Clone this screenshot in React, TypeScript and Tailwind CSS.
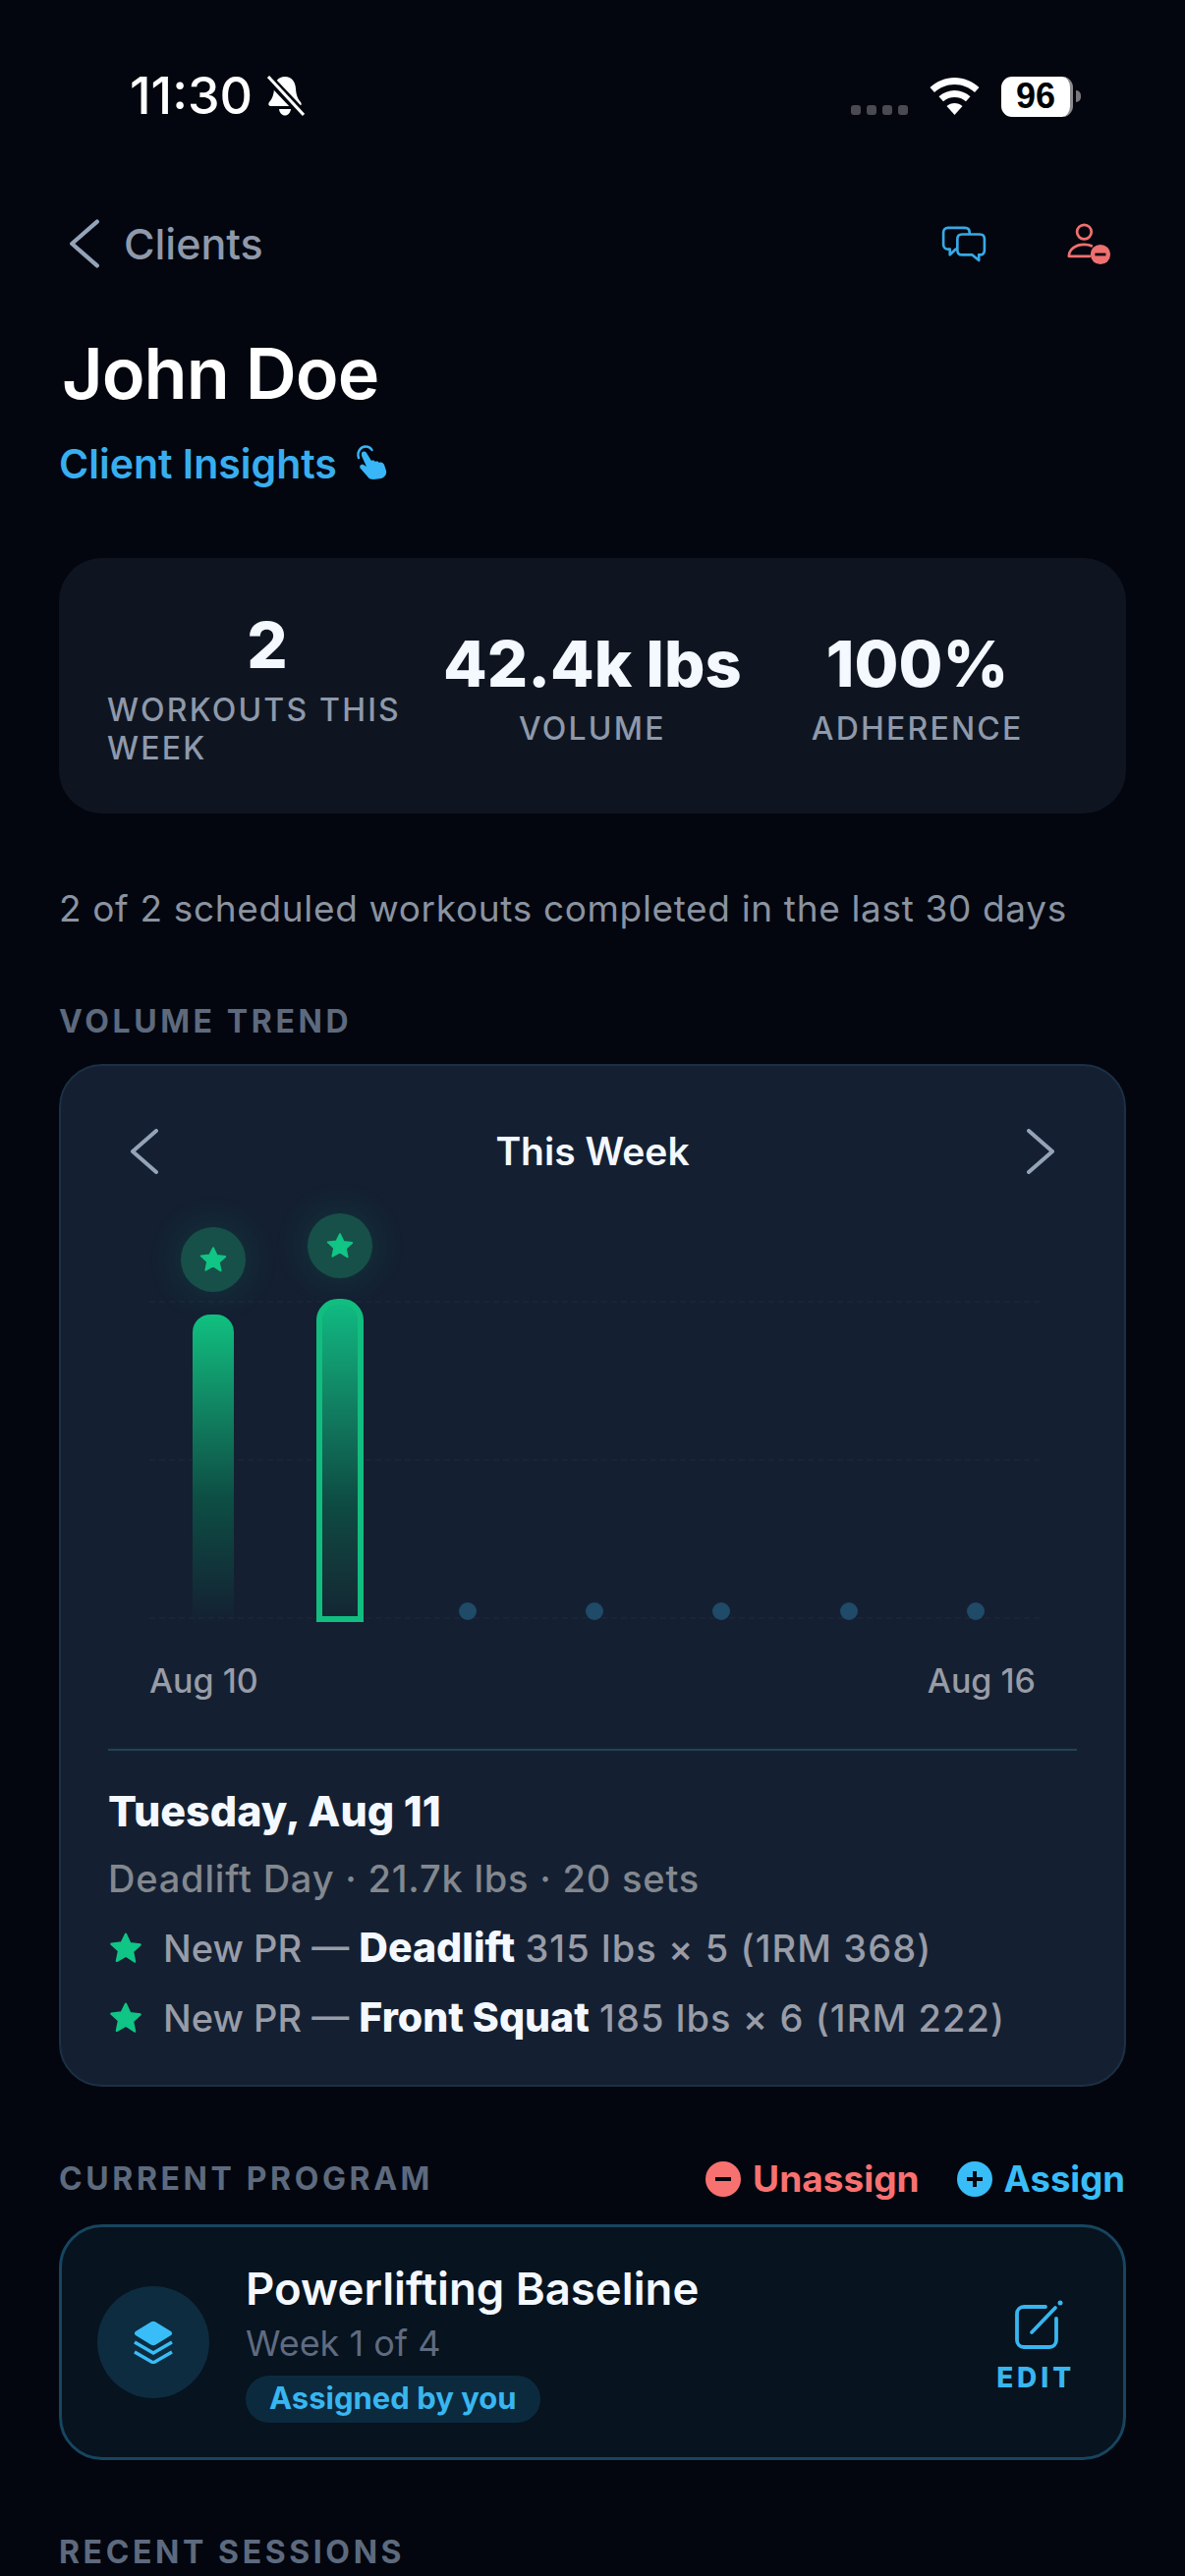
import React from 'react';

const Star = ({ className }: { className: string }) => (
  <svg viewBox="0 0 24 24" className={className} fill="currentColor" stroke="currentColor" strokeWidth="1.5" strokeLinejoin="round">
    <path d="M12 2.500l2.900 6.300 6.900.8-5.100 4.700 1.400 6.800L12 17.100l-6.100 3.500 1.400-6.800-5.100-4.700 6.900-.8z" />
  </svg>
);

const Chevron = ({ right = false, className = 'w-[30px] h-[46px]' }: { right?: boolean; className?: string }) => (
  <svg viewBox="0 0 30 46" className={`${className} text-[#94a3b8]`} fill="none" stroke="currentColor" strokeWidth="4" strokeLinecap="round" strokeLinejoin="round">
    <path d={right ? 'M3 2l24 21L3 44' : 'M27 2L3 23l24 21'} />
  </svg>
);

const StatusBar = () => (
  <div className="flex items-start justify-between pl-[132px] pr-[106px] pt-[72px] h-[213px]">
    <div className="flex items-center gap-[13px] text-white">
      <span className="text-[52px] leading-[52px] font-medium">11:30</span>
      <svg viewBox="0 0 40 42" className="w-[40px] h-[42px]" fill="currentColor">
        <path d="M20 1c7 0 10.500 5 11 12 .4 6 1.500 10 5 14 1.500 2 .5 4-2 4H6c-2.500 0-3.500-2-2-4 3.500-4 4.600-8 5-14 .5-7 4-12 11-12z" />
        <path d="M14 34h12c-.5 4-3 6.500-6 6.500S14.500 38 14 34z" />
        <path d="M2 1l36 38" stroke="#03060e" strokeWidth="9" />
        <path d="M3 1l36 39" stroke="currentColor" strokeWidth="3" />
      </svg>
    </div>
    <div className="flex items-center gap-[22px] h-[42px] mt-[5px]">
      <div className="flex gap-[6px] mt-[27px]">
        {[0, 1, 2, 3].map((i) => (
          <span key={i} className="w-[10px] h-[10px] rounded-[3px] bg-[#4a4a50]" />
        ))}
      </div>
      <svg viewBox="0 0 50 38" className="w-[51px] h-[38px] text-white" fill="currentColor">
        <path d="M25 0c9.500 0 18 3.800 25 10l-4.500 5C40 10 33 7 25 7S10 10 4.500 15L0 10C7 3.800 15.500 0 25 0z" />
        <path d="M25 13c6 0 11.500 2.300 16 6.200l-4.500 5C33.500 21.500 29.500 20 25 20s-8.500 1.500-11.500 4.200l-4.500-5C13.500 15.300 19 13 25 13z" />
        <path d="M25 26c3 0 5.800 1.100 8 3L25 38l-8-9c2.200-1.900 5-3 8-3z" />
      </svg>
      <div className="flex items-center gap-[3px]">
        <div className="w-[73px] h-[41px] rounded-[11px] bg-white flex items-center justify-center border-r-[3px] border-[#8a8a8e]">
          <span className="text-[36px] leading-none font-bold text-black font-['Liberation_Sans',sans-serif]">96</span>
        </div>
        <span className="w-[5px] h-[12px] rounded-r-full bg-[#77777c]" />
      </div>
    </div>
  </div>
);

const Stat = ({ value, label, className }: { value: string; label: string; className: string }) => (
  <div className={`flex flex-col items-center ${className}`}>
    <div className="text-[65px] leading-[70px] font-extrabold text-[#f4f8ff] whitespace-nowrap">{value}</div>
    <div className="mt-[11px] text-[32px] leading-[39px] font-medium tracking-[2.200px] text-[#8e99ab]">{label}</div>
  </div>
);

const SectionLabel = ({ children }: { children: React.ReactNode }) => (
  <div className="text-[32px] leading-[38px] font-bold tracking-[3.600px] text-[#5d6a7e]">{children}</div>
);

const Bar = ({ height, selected = false }: { height: string; selected?: boolean }) => (
  <div className="flex flex-col items-center">
    <div className="w-[66px] h-[66px] rounded-full bg-[#175048] shadow-[0_0_36px_rgba(16,185,129,0.16)] flex items-center justify-center text-[#10c585]">
      <Star className="w-[30px] h-[30px]" />
    </div>
    <div
      className={`${height} ${selected ? 'w-[48px] mt-[21px] rounded-t-[22px] border-[6px] border-[#12bd80] bg-gradient-to-b from-[#10b981] via-[#0d4a42] via-65% to-[#132733]' : 'w-[42px] mt-[23px] rounded-t-[18px] bg-gradient-to-b from-[#10c080] via-[#0d4e44] via-60% to-[#10b98100]'}`}
    />
  </div>
);

const Dot = () => (
  <div className="flex justify-center mb-[2px]">
    <span className="w-[18px] h-[18px] rounded-full bg-[#1f4a68]" />
  </div>
);

const PrLine = ({ lift, rest }: { lift: string; rest: string }) => (
  <div className="flex items-center gap-[20px] h-[71px]">
    <Star className="w-[36px] h-[36px] text-[#10c585]" />
    <div className="text-[38px] leading-[46px] font-medium text-[#989ca7] whitespace-nowrap">
      New PR — <span className="text-[41px] font-extrabold text-[#f4f8ff]">{lift}</span> <span className="tracking-[1.100px]">{rest}</span>
    </div>
  </div>
);

export default function App() {
  return (
    <div className="w-[1206px] h-[2622px] overflow-hidden bg-[#03060e] font-['Inter',sans-serif]">
      <StatusBar />

      <div className="px-[60px]">
        {/* Nav */}
        <div className="flex items-center justify-between h-[70px] pl-[10px] pr-[15px]">
          <div className="flex items-center gap-[24px]">
            <Chevron className="w-[32px] h-[52px]" />
            <span className="text-[43px] leading-[52px] font-medium text-[#8e99ab]">Clients</span>
          </div>
          <div className="flex items-center gap-[81px]">
            <svg viewBox="0 0 48 40" className="w-[46px] h-[38px] text-[#38a9e6]" fill="none" stroke="currentColor" strokeWidth="2.800" strokeLinejoin="round">
              <path d="M17 26h-2l-6 6v-6H7c-3 0-5-2-5-5V8c0-3 2-5 5-5h18c3 0 5 2 5 5v2" />
              <path d="M22 10h19c3 0 5 2 5 5v12c0 3-2 5-5 5h-1v6l-7-6H22c-3 0-5-2-5-5V15c0-3 2-5 5-5z" />
            </svg>
            <svg viewBox="0 0 48 48" className="w-[46px] h-[44px] text-[#ee7070]">
              <circle cx="19" cy="11" r="8" fill="none" stroke="currentColor" strokeWidth="3" />
              <path d="M2 38c0-8 8-13 17-13 3 0 6 .5 8 1.500M3 38h22" fill="none" stroke="currentColor" strokeWidth="3" strokeLinecap="round" />
              <circle cx="37" cy="36" r="11" fill="currentColor" />
              <rect x="31" y="34.500" width="12" height="3" fill="#03060e" />
            </svg>
          </div>
        </div>

        <h1 className="mt-[55px] ml-[3px] text-[72px] leading-[84px] font-semibold tracking-[-1px] text-white">John Doe</h1>
        <div className="mt-[26px] flex items-center gap-[20px]">
          <span className="text-[41px] leading-[48px] font-semibold text-[#38aef0]">Client Insights</span>
          <svg viewBox="0 0 32 38" className="w-[32px] h-[38px] text-[#38b6f8]" fill="currentColor">
            <path d="M2 13C0 7 4 1.500 9 1.500c3 0 5 1 6.500 3.500" fill="none" stroke="currentColor" strokeWidth="2.400" strokeLinecap="round" />
            <path d="M5 8c1-2 4-2 5 0l5 8c2-1 3 0 4 1 2-1 3 0 4 1 2-1 4 0 5 2l2 6c1 4-2 7-5 8l-8 1c-3 0-5-1-6-3L4 24c-2-2 0-5 3-4l3 2L5 11z" />
          </svg>
        </div>

        {/* Stats */}
        <div className="mt-[72px] h-[260px] pt-[6px] rounded-[44px] bg-[#0f1520] flex items-center pl-[49px]">
          <Stat value="2" label="WORKOUTS THIS WEEK" className="w-[326px]" />
          <Stat value="42.4k lbs" label="VOLUME" className="ml-[16px]" />
          <Stat value="100%" label="ADHERENCE" className="ml-[71px]" />
        </div>

        <p className="mt-[73px] text-[37px] leading-[48px] text-[#8a93a1] tracking-[0.650px]">2 of 2 scheduled workouts completed in the last 30 days</p>

        <div className="mt-[72px]"><SectionLabel>VOLUME TREND</SectionLabel></div>

        {/* Chart card */}
        <div className="mt-[24px] h-[1041px] rounded-[44px] bg-[#142032] border-[2px] border-[#1c3045] px-[48px] pt-[62px]">
          <div className="flex items-center justify-between px-[22px] h-[50px]">
            <Chevron />
            <span className="text-[39px] leading-[48px] font-semibold text-[#f4f8ff]">This Week</span>
            <Chevron right />
          </div>
          <div className="relative ml-[42px] mr-[38px] mt-[38px] h-[416px]">
            <div className="absolute inset-x-0 top-[89px] bottom-[3px] flex flex-col justify-between">
              <div className="border-t-[2px] border-dashed border-[#ffffff06]" />
              <div className="border-t-[2px] border-dashed border-[#ffffff06]" />
              <div className="border-t-[2px] border-dashed border-[#ffffff06]" />
            </div>
            <div className="relative grid grid-cols-7 h-full items-end">
              <Bar height="h-[313px]" />
              <Bar height="h-[329px]" selected />
              <Dot />
              <Dot />
              <Dot />
              <Dot />
              <Dot />
            </div>
          </div>
          <div className="flex justify-between mx-[42px] mt-[40px] text-[34px] leading-[40px] font-medium text-[#989ca7]">
            <span>Aug 10</span>
            <span>Aug 16</span>
          </div>
          <div className="mt-[49px] border-t-[2px] border-[#234357]" />
          <div className="mt-[36px] text-[43px] leading-[50px] font-extrabold text-[#f4f8ff]">Tuesday, Aug 11</div>
          <div className="mt-[21px] text-[38px] leading-[46px] font-medium tracking-[0.800px] text-[#83888f]">Deadlift Day · 21.7k lbs · 20 sets</div>
          <div className="mt-[12px]">
            <PrLine lift="Deadlift" rest="315 lbs × 5 (1RM 368)" />
            <PrLine lift="Front Squat" rest="185 lbs × 6 (1RM 222)" />
          </div>
        </div>

        {/* Current program */}
        <div className="mt-[72px] flex items-center justify-between h-[44px]">
          <SectionLabel>CURRENT PROGRAM</SectionLabel>
          <div className="flex items-center gap-[38px] mr-[1px]">
            <div className="flex items-center gap-[12px]">
              <span className="relative w-[36px] h-[36px] rounded-full bg-[#f87171]">
                <span className="absolute left-[10px] right-[10px] top-[16px] h-[4px] bg-[#03060e]" />
              </span>
              <span className="text-[37px] leading-[44px] font-bold text-[#f87171]">Unassign</span>
            </div>
            <div className="flex items-center gap-[12px]">
              <span className="relative w-[36px] h-[36px] rounded-full bg-[#38bdf8]">
                <span className="absolute left-[10px] right-[10px] top-[16px] h-[4px] bg-[#03060e]" />
                <span className="absolute top-[10px] bottom-[10px] left-[16px] w-[4px] bg-[#03060e]" />
              </span>
              <span className="text-[36.500px] leading-[44px] font-bold text-[#38bdf8]">Assign</span>
            </div>
          </div>
        </div>

        <div className="mt-[24px] h-[240px] rounded-[44px] border-[3px] border-[#17455f] bg-[#07131e] flex items-center pl-[36px] pr-[49px]">
          <div className="w-[114px] h-[114px] rounded-full bg-[#0d2c40] flex items-center justify-center">
            <svg viewBox="0 0 40 44" className="w-[40px] h-[44px] text-[#38bdf8]">
              <path d="M17.500 1.500c1.500-1 3.500-1 5 0L38 11c1.500 1 1.500 3 0 4l-15.500 9.500c-1.500 1-3.500 1-5 0L2 15c-1.500-1-1.500-3 0-4z" fill="currentColor" />
              <path d="M1 22l19 11 19-11M1 32l19 11 19-11" fill="none" stroke="currentColor" strokeWidth="3.400" />
            </svg>
          </div>
          <div className="ml-[37px] flex-1">
            <div className="text-[45.500px] leading-[54px] font-semibold text-[#f4f8ff]">Powerlifting Baseline</div>
            <div className="mt-[6px] text-[36px] leading-[44px] text-[#5f6b80]">Week 1 of 4</div>
            <div className="mt-[11px] inline-flex items-center h-[48px] px-[24px] rounded-full bg-[#0c2a3e] text-[31px] font-bold text-[#38b6f0]">Assigned by you</div>
          </div>
          <div className="flex flex-col items-center mt-[8px]">
            <svg viewBox="0 0 50 50" className="w-[50px] h-[50px] ml-[6px] text-[#38b6f0]" fill="none" stroke="currentColor" strokeWidth="3.800" strokeLinecap="round" strokeLinejoin="round">
              <path d="M32 7H10C6 7 3 10 3 14v27c0 4 3 7 7 7h26c4 0 7-3 7-7V19" />
              <path d="M18 33L42 8" />
              <circle cx="47" cy="3" r="2.500" fill="currentColor" stroke="none" />
            </svg>
            <span className="mt-[13px] text-[28px] leading-[32px] font-extrabold tracking-[3.900px] text-[#38b6f0]">EDIT</span>
          </div>
        </div>

        <div className="mt-[75px]"><SectionLabel>RECENT SESSIONS</SectionLabel></div>
      </div>
    </div>
  );
}
